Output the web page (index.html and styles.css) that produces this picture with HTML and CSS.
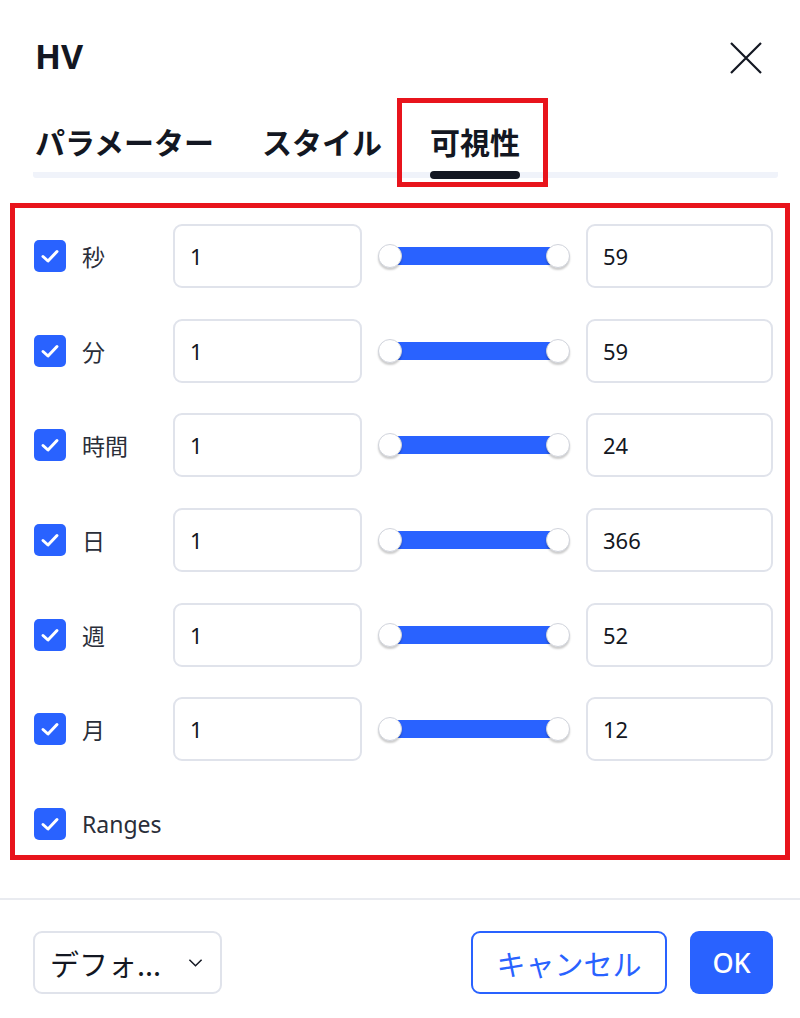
FILE: index.html
```html
<!DOCTYPE html>
<html lang="ja">
<head>
<meta charset="utf-8">
<link rel="stylesheet" href="styles.css">
</head>
<body>
<div class="dialog">
  <header class="header">
    <div class="title">HV</div>
    <svg class="close" viewBox="0 0 34 34" width="34" height="34"><path d="M2 2 L32 32 M32 2 L2 32" stroke="#131722" stroke-width="2.2" fill="none"/></svg>
  </header>
  <nav class="tabs">
    <div class="tab">パラメーター</div>
    <div class="tab">スタイル</div>
    <div class="tab active">可視性</div>
  </nav>
  <section class="content">
    <div class="row">
      <span class="cb"><svg viewBox="0 0 32 32" width="32" height="32"><path d="M9 16.5 L14 21 L23 11.5" stroke="#fff" stroke-width="3" fill="none" stroke-linecap="round" stroke-linejoin="round"/></svg></span>
      <span class="label">秒</span>
      <div class="field">1</div>
      <div class="slider"><div class="track"></div><span class="knob"></span><span class="knob"></span></div>
      <div class="field">59</div>
    </div>
    <div class="row">
      <span class="cb"><svg viewBox="0 0 32 32" width="32" height="32"><path d="M9 16.5 L14 21 L23 11.5" stroke="#fff" stroke-width="3" fill="none" stroke-linecap="round" stroke-linejoin="round"/></svg></span>
      <span class="label">分</span>
      <div class="field">1</div>
      <div class="slider"><div class="track"></div><span class="knob"></span><span class="knob"></span></div>
      <div class="field">59</div>
    </div>
    <div class="row">
      <span class="cb"><svg viewBox="0 0 32 32" width="32" height="32"><path d="M9 16.5 L14 21 L23 11.5" stroke="#fff" stroke-width="3" fill="none" stroke-linecap="round" stroke-linejoin="round"/></svg></span>
      <span class="label">時間</span>
      <div class="field">1</div>
      <div class="slider"><div class="track"></div><span class="knob"></span><span class="knob"></span></div>
      <div class="field">24</div>
    </div>
    <div class="row">
      <span class="cb"><svg viewBox="0 0 32 32" width="32" height="32"><path d="M9 16.5 L14 21 L23 11.5" stroke="#fff" stroke-width="3" fill="none" stroke-linecap="round" stroke-linejoin="round"/></svg></span>
      <span class="label">日</span>
      <div class="field">1</div>
      <div class="slider"><div class="track"></div><span class="knob"></span><span class="knob"></span></div>
      <div class="field">366</div>
    </div>
    <div class="row">
      <span class="cb"><svg viewBox="0 0 32 32" width="32" height="32"><path d="M9 16.5 L14 21 L23 11.5" stroke="#fff" stroke-width="3" fill="none" stroke-linecap="round" stroke-linejoin="round"/></svg></span>
      <span class="label">週</span>
      <div class="field">1</div>
      <div class="slider"><div class="track"></div><span class="knob"></span><span class="knob"></span></div>
      <div class="field">52</div>
    </div>
    <div class="row">
      <span class="cb"><svg viewBox="0 0 32 32" width="32" height="32"><path d="M9 16.5 L14 21 L23 11.5" stroke="#fff" stroke-width="3" fill="none" stroke-linecap="round" stroke-linejoin="round"/></svg></span>
      <span class="label">月</span>
      <div class="field">1</div>
      <div class="slider"><div class="track"></div><span class="knob"></span><span class="knob"></span></div>
      <div class="field">12</div>
    </div>
    <div class="row">
      <span class="cb"><svg viewBox="0 0 32 32" width="32" height="32"><path d="M9 16.5 L14 21 L23 11.5" stroke="#fff" stroke-width="3" fill="none" stroke-linecap="round" stroke-linejoin="round"/></svg></span>
      <span class="label wide">Ranges</span>
    </div>
  </section>
  <footer class="footer">
    <div class="select">デフォ...<svg viewBox="0 0 16 10" width="15" height="10"><path d="M1.5 1.5 L8 8 L14.5 1.5" stroke="#131722" stroke-width="1.6" fill="none"/></svg></div>
    <div class="actions">
      <div class="btn cancel">キャンセル</div>
      <div class="btn ok">OK</div>
    </div>
  </footer>
</div>
</body>
</html>
```
FILE: styles.css
```css
* { box-sizing: border-box; }
html, body { margin: 0; padding: 0; background: #fff; }
body {
  font-family: "Noto Sans", "Noto Sans CJK JP", sans-serif;
  color: #131722;
  width: 800px;
  height: 1018px;
  overflow: hidden;
}
.dialog { width: 800px; }
.header {
  display: flex;
  justify-content: space-between;
  align-items: center;
  padding: 33px 37px 0 35px;
  height: 78px;
}
.title {
  font-size: 34px;
  font-weight: 700;
  line-height: 40px;
}
.close { margin-top: 4px; }
.tabs {
  display: flex;
  gap: 48px;
  margin: 40px 22px 0 33px;
  padding-left: 2px;
  border-bottom: 6px solid #f0f3fa;
  border-radius: 3px;
}
.tab {
  font-family: "Noto Sans CJK JP", sans-serif;
  font-size: 30px;
  font-weight: 700;
  line-height: 46px;
  height: 54px;
  position: relative;
  white-space: nowrap;
}
.tab.active::after {
  content: "";
  position: absolute;
  left: 0; right: 0;
  bottom: -7px;
  height: 8px;
  border-radius: 4px;
  background: #131722;
}
.tab.active::before {
  content: "";
  position: absolute;
  left: -33px; right: -28px;
  top: -20px; bottom: -15px;
  border: 5px solid #e8141c;
}
.content {
  margin: 25px 10px 0 10px;
  border: 5px solid #e8141c;
  padding: 16px 0 0 19px;
  height: 657px;
  display: flex;
  flex-direction: column;
  gap: 30.7px;
}
.row {
  display: grid;
  grid-template-columns: 32px 75px 189px 192px 187px;
  column-gap: 16px;
  align-items: center;
  height: 64px;
}
.cb {
  width: 32px; height: 32px;
  border-radius: 5px;
  background: #2962ff;
  display: block;
}
.cb svg { display: block; }
.label {
  font-family: "Noto Sans CJK JP", sans-serif;
  font-size: 23px;
  color: #2a2e39;
  white-space: nowrap;
}
.label.wide { font-family: "Noto Sans", sans-serif; font-size: 23px; }
.field {
  height: 64px;
  border: 2px solid #e0e3eb;
  border-radius: 9px;
  font-size: 22px;
  line-height: 60px;
  padding-left: 15px;
  color: #131722;
}
.slider {
  position: relative;
  height: 26px;
  display: flex;
  align-items: center;
  justify-content: space-between;
}
.track {
  position: absolute;
  left: 12px; right: 12px;
  top: 4px;
  height: 18px;
  background: #2962ff;
}
.knob {
  position: relative;
  width: 24px; height: 24px;
  border-radius: 50%;
  background: #fff;
  border: 1px solid #d1d4dc;
  box-shadow: 0 2px 2px rgba(0,0,0,0.2);
}
.footer {
  margin-top: 38px;
  border-top: 2px solid #e9ebf0;
  padding: 31px 27px 0 33px;
  display: flex;
  justify-content: space-between;
  align-items: center;
}
.select {
  width: 189px; height: 63px;
  border: 2px solid #e0e3eb;
  border-radius: 9px;
  display: flex;
  align-items: center;
  justify-content: space-between;
  padding: 0 17px 0 15px;
  font-family: "Noto Sans CJK JP", sans-serif;
  font-size: 29px;
  color: #131722;
}
.actions { display: flex; gap: 23px; }
.btn {
  height: 63px;
  border-radius: 9px;
  display: flex;
  align-items: center;
  justify-content: center;
  font-family: "Noto Sans CJK JP", sans-serif;
  font-size: 29px;
}
.cancel {
  width: 196px;
  border: 2px solid #2962ff;
  color: #2962ff;
}
.ok {
  width: 83px;
  background: #2962ff;
  color: #fff;
  font-family: "Noto Sans", sans-serif;
  font-size: 27px;
  font-weight: 500;
}
```
